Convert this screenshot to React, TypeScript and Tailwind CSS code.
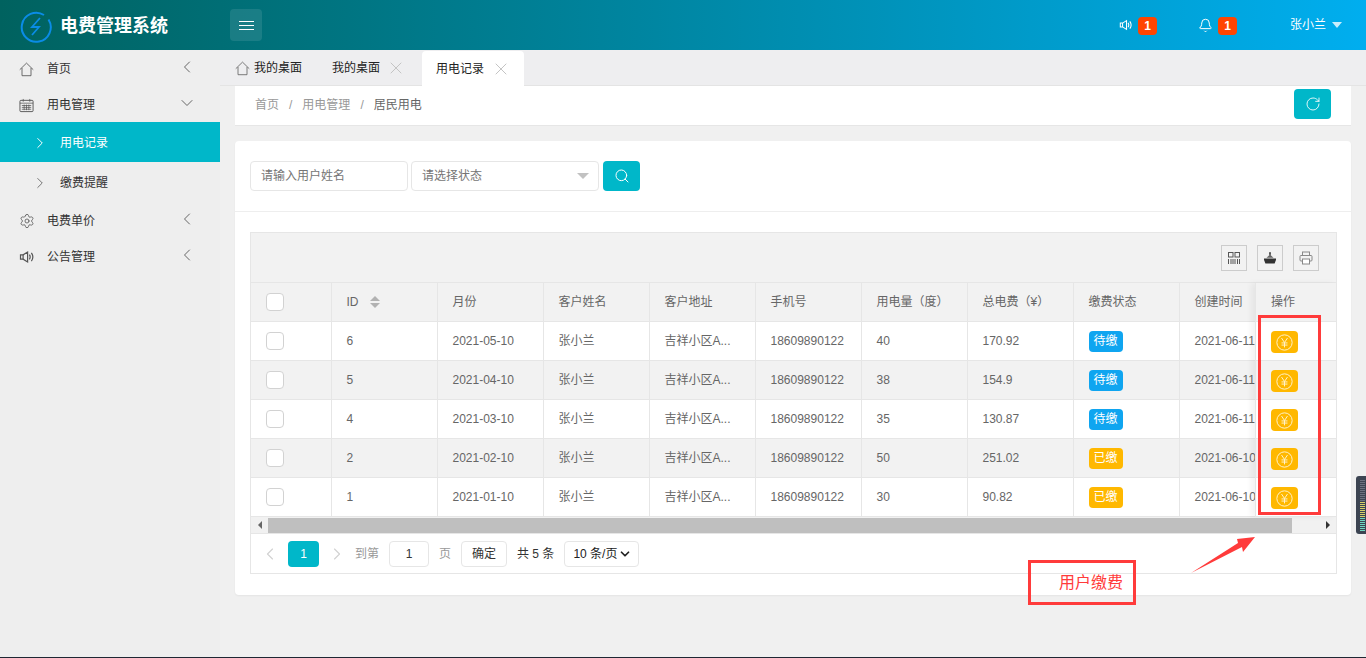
import { ChevronDown, ChevronLeft, ChevronRight, Bell, RotateCw, Search, Settings, X } from "lucide-react";
import type { ReactNode } from "react";

const font = "font-['Liberation_Sans','Noto_Sans_CJK_SC',sans-serif]";

const rows = [
  { id: 6, month: "2021-05-10", used: 40, fee: "170.92", paid: false, created: "2021-06-11" },
  { id: 5, month: "2021-04-10", used: 38, fee: "154.9", paid: false, created: "2021-06-11" },
  { id: 4, month: "2021-03-10", used: 35, fee: "130.87", paid: false, created: "2021-06-11" },
  { id: 2, month: "2021-02-10", used: 50, fee: "251.02", paid: true, created: "2021-06-10" },
  { id: 1, month: "2021-01-10", used: 30, fee: "90.82", paid: true, created: "2021-06-10" },
];

const headers = ["月份", "客户姓名", "客户地址", "手机号", "用电量（度）", "总电费（¥）", "缴费状态"];

function HouseIcon({ className }: { className?: string }) {
  return (
    <svg viewBox="0 0 16 16" fill="none" stroke="currentColor" strokeWidth="0.9" className={className}>
      <path d="M0.8 8.2L8 1.2l7.2 7" />
      <path d="M3.2 6.4v8.2h9.6V6.4" />
    </svg>
  );
}

function SpeakerIcon({ className }: { className?: string }) {
  return (
    <svg viewBox="0 0 16 16" fill="none" stroke="currentColor" strokeWidth="1.2" className={className}>
      <path d="M1.5 5.8h2.6L8.6 3v10L4.1 10.2H1.5z" />
      <path d="M4.1 5.8v4.4" />
      <path d="M10.4 5.6c.9 1.4.9 3.4 0 4.8M12.4 3.9c1.7 2.4 1.7 5.8 0 8.2" />
    </svg>
  );
}

function CalendarIcon() {
  return (
    <svg viewBox="0 0 16 16" fill="none" stroke="#555" strokeWidth="1" className="w-[15px] h-[15px]">
      <rect x="1" y="2.5" width="14" height="12" rx="1" />
      <path d="M4.5 1v3M11.5 1v3M1 5.5h14M3 8h10M3 10h10M3 12h10M5.5 7v6M8 7v6M10.5 7v6" strokeWidth="0.8" />
    </svg>
  );
}

function YuanIcon() {
  return (
    <svg viewBox="0 0 16 16" fill="none" stroke="#fff3d0" strokeWidth="0.9" className="w-[17px] h-[17px]">
      <circle cx="8" cy="8" r="7.2" />
      <path d="M5.2 3.8L8 8l2.8-4.2M8 8v4.6M5.2 8.4h5.6M5.2 10.4h5.6" />
    </svg>
  );
}

function MenuItem({ icon, label, chevron }: { icon: ReactNode; label: string; chevron: "left" | "down" }) {
  return (
    <div className="h-9 pt-[2px] flex items-center pl-[19px] text-[#333]">
      <span className="w-7 flex items-center text-[#555]">{icon}</span>
      <span className="flex-1">{label}</span>
      {chevron === "left" ? (
        <ChevronLeft className="w-5 h-5 mr-[23px] -mt-1 text-[#666]" strokeWidth={1.2} />
      ) : (
        <ChevronDown className="w-5 h-5 mr-[23px] -mt-1 text-[#666]" strokeWidth={1.2} />
      )}
    </div>
  );
}

function Sidebar() {
  return (
    <aside className="w-[220px] shrink-0 bg-[#eeeeee] text-xs">
      <MenuItem icon={<HouseIcon className="w-[15px] h-[15px]" />} label="首页" chevron="left" />
      <MenuItem icon={<CalendarIcon />} label="用电管理" chevron="down" />
      <div className="h-10 pt-[2px] bg-[#00b7c9] text-white flex items-center pl-[31px]">
        <ChevronRight className="w-[18px] h-[18px] mr-[11px]" strokeWidth={1.3} />
        用电记录
      </div>
      <div className="h-10 pt-[2px] text-[#333] flex items-center pl-[31px]">
        <ChevronRight className="w-[18px] h-[18px] mr-[11px] text-[#666]" strokeWidth={1.2} />
        缴费提醒
      </div>
      <MenuItem icon={<Settings className="w-4 h-4" strokeWidth={1.2} />} label="电费单价" chevron="left" />
      <MenuItem icon={<SpeakerIcon className="w-4 h-4" />} label="公告管理" chevron="left" />
    </aside>
  );
}

function Badge() {
  return <span className="mt-[2px] w-[19px] h-[18px] rounded-sm bg-[#ff4500] text-xs font-bold flex items-center justify-center">1</span>;
}

function Header() {
  return (
    <header className="h-[50px] shrink-0 flex items-center bg-gradient-to-r from-[#00625f] to-[#00aeef] text-white">
      <div className="w-[230px] mt-[2px] flex items-center pl-5">
        <svg viewBox="0 0 32 32" className="w-8 h-8 mr-[8px] mt-[2px]" fill="none" stroke="#0a8ce6" strokeWidth="2">
          <path d="M24 4A14.5 14.5 0 1 0 28.5 8.5" />
          <path d="M20 7l-8 9h7l-7 8" strokeWidth="1.8" />
        </svg>
        <span className="text-lg font-bold">电费管理系统</span>
      </div>
      <button className="w-8 h-8 rounded-sm bg-white/10 flex flex-col items-center justify-center gap-[3px]">
        <span className="w-[15px] h-px bg-white" />
        <span className="w-[15px] h-px bg-white" />
        <span className="w-[15px] h-px bg-white" />
      </button>
      <div className="flex-1" />
      <SpeakerIcon className="w-[14px] h-[14px] mr-[5px]" />
      <Badge />
      <Bell className="w-[15px] h-[15px] ml-[41px] mr-[5px]" strokeWidth={1.6} />
      <Badge />
      <span className="ml-[53px] text-xs">张小兰</span>
      <span className="ml-1.5 mr-6 w-0 h-0 border-x-[5px] border-x-transparent border-t-[6px] border-t-[#c9eefc]" />
    </header>
  );
}

function Tabs() {
  return (
    <div className="h-9 shrink-0 bg-[#eeeef0] border-b border-[#e4e4e4] flex items-end text-xs text-[#222] pl-[15px]">
      <div className="h-[34px] flex items-center w-[97px]">
        <HouseIcon className="w-[15px] h-[15px] mr-1 text-[#666]" />
        我的桌面
      </div>
      <div className="h-[34px] flex items-center w-[90px]">
        我的桌面
        <X className="w-5 h-5 ml-1.5 text-[#c4c4c4]" strokeWidth={1.2} />
      </div>
      <div className="h-[35px] -mb-px w-[102px] bg-white rounded-t-sm flex items-center pl-3.5">
        用电记录
        <X className="w-5 h-5 ml-[7px] text-[#c4c4c4]" strokeWidth={1.2} />
      </div>
    </div>
  );
}

function Checkbox() {
  return <span className="block w-[18px] h-[18px] bg-white border border-[#d2d2d2] rounded-sm" />;
}

function ToolButton({ children }: { children: ReactNode }) {
  return <button className="w-[26px] h-[26px] border border-[#ccc] flex items-center justify-center">{children}</button>;
}

function Cell({ children, first = false }: { children?: ReactNode; first?: boolean }) {
  return (
    <div className={`h-full shrink-0 border-r border-[#e6e6e6] flex items-center whitespace-nowrap overflow-hidden ${first ? "w-[81px] pl-[15px]" : "w-[106px] pl-[14.5px]"}`}>
      {children}
    </div>
  );
}

function DataTable() {
  return (
    <div className="border border-[#e6e6e6] text-xs text-[#666]">
      <div className="h-[50px] bg-[#f2f2f2] border-b border-[#e6e6e6] flex items-center justify-end gap-2.5 pr-[17px]">
        <ToolButton>
          <svg viewBox="0 0 14 14" className="w-3.5 h-3.5" fill="none" stroke="#555" strokeWidth="1">
            <rect x="1.5" y="1.5" width="4.5" height="4.5" />
            <rect x="8" y="1.5" width="4.5" height="4.5" />
            <path d="M1.5 8v5M4 8v5M6 8v5M8 8v5M10.5 8v5M12.5 8v5" />
          </svg>
        </ToolButton>
        <ToolButton>
          <svg viewBox="0 0 14 14" className="w-3.5 h-3.5" fill="#333">
            <path d="M1 7.5h12v1.2l-1.4 3.8H2.4L1 8.7z" />
            <path d="M3.5 6.8L7 3.4l3.5 3.4z" fill="#666" />
            <rect x="6.2" y="1.2" width="1.6" height="2.6" />
          </svg>
        </ToolButton>
        <ToolButton>
          <svg viewBox="0 0 14 14" className="w-3.5 h-3.5" fill="none" stroke="#888" strokeWidth="1">
            <rect x="3.5" y="1" width="7" height="3.5" />
            <rect x="1" y="4.5" width="12" height="5.5" rx="1" />
            <rect x="3.5" y="8" width="7" height="5" fill="white" />
          </svg>
        </ToolButton>
      </div>

      <div className="flex">
        <div className="w-[1004px] shrink-0 overflow-hidden">
          <div className="h-[39px] bg-[#f2f2f2] border-b border-[#e6e6e6] flex">
            <Cell first><Checkbox /></Cell>
            <Cell>
              ID
              <span className="ml-[11px] flex flex-col gap-[2px]">
                <span className="w-0 h-0 border-x-[5px] border-x-transparent border-b-[5px] border-b-[#b2b2b2]" />
                <span className="w-0 h-0 border-x-[5px] border-x-transparent border-t-[5px] border-t-[#b2b2b2]" />
              </span>
            </Cell>
            {headers.map((h) => (
              <Cell key={h}>{h}</Cell>
            ))}
            <Cell>创建时间</Cell>
          </div>
          {rows.map((r, i) => (
            <div key={r.id} className={`h-[39px] border-b border-[#e6e6e6] flex ${i % 2 === 1 ? "bg-[#f2f2f2]" : "bg-white"}`}>
              <Cell first><Checkbox /></Cell>
              <Cell>{r.id}</Cell>
              <Cell>{r.month}</Cell>
              <Cell>张小兰</Cell>
              <Cell>吉祥小区A...</Cell>
              <Cell>18609890122</Cell>
              <Cell>{r.used}</Cell>
              <Cell>{r.fee}</Cell>
              <Cell>
                <span className={`w-[34px] h-[21px] rounded-sm text-white flex items-center justify-center ${r.paid ? "bg-[#ffb800]" : "bg-[#0fa5f0]"}`}>
                  {r.paid ? "已缴" : "待缴"}
                </span>
              </Cell>
              <Cell>{r.created}</Cell>
            </div>
          ))}
        </div>

        <div className="flex-1 border-l border-[#e6e6e6] shadow-[-4px_0_6px_rgba(0,0,0,0.05)]">
          <div className="h-[39px] bg-[#f2f2f2] border-b border-[#e6e6e6] flex items-center pl-[15px]">操作</div>
          {rows.map((r, i) => (
            <div key={r.id} className={`h-[39px] border-b border-[#e6e6e6] flex items-center pl-[15px] ${i % 2 === 1 ? "bg-[#f2f2f2]" : "bg-white"}`}>
              <button className="mt-[2px] w-[27px] h-[22px] rounded-sm bg-[#ffb800] flex items-center justify-center">
                <YuanIcon />
              </button>
            </div>
          ))}
        </div>
      </div>

      <div className="h-[17px] bg-[#f1f1f1] border-b border-[#e6e6e6] flex items-center">
        <span className="w-[17px] flex justify-center">
          <span className="w-0 h-0 border-y-[4px] border-y-transparent border-r-[4px] border-r-[#666]" />
        </span>
        <span className="w-[1024px] h-[15px] bg-[#bfbfbf]" />
        <span className="flex-1" />
        <span className="w-[17px] flex justify-center">
          <span className="w-0 h-0 border-y-[4px] border-y-transparent border-l-[4px] border-l-[#333]" />
        </span>
      </div>

      <div className="h-[39px] flex items-center pl-[11px] text-[#333]">
        <ChevronLeft className="w-5 h-5 text-[#d2d2d2] -mx-[2px] mr-2" strokeWidth={1.4} />
        <span className="w-[31px] h-[26px] bg-[#00b7c9] rounded-sm text-white flex items-center justify-center">1</span>
        <ChevronRight className="w-5 h-5 text-[#d2d2d2] ml-2 -mr-[2px]" strokeWidth={1.4} />
        <span className="ml-[10px] text-[#999]">到第</span>
        <span className="ml-2.5 w-10 h-[26px] bg-white border border-[#e6e6e6] rounded-sm flex items-center justify-center">1</span>
        <span className="ml-2.5 text-[#999]">页</span>
        <button className="ml-2.5 w-[46px] h-[26px] bg-white border border-[#e6e6e6] rounded-sm">确定</button>
        <span className="ml-2.5">共 5 条</span>
        <span className="ml-2.5 w-[75px] h-[26px] bg-white border border-[#e6e6e6] rounded-sm flex items-center justify-between pl-2 pr-1.5 text-[#222]">
          10 条/页
          <ChevronDown className="w-3.5 h-3.5" strokeWidth={3} />
        </span>
      </div>
    </div>
  );
}

export default function App() {
  return (
    <div className={`relative h-[658px] overflow-hidden flex flex-col bg-[#f0f0f0] border-b border-[#1f2733] ${font}`}>
      <Header />
      <div className="flex-1 flex min-h-0">
        <Sidebar />
        <main className="flex-1 min-w-0 flex flex-col">
          <Tabs />
          <div className="px-[15px]">
            <div className="h-10 bg-white border-b border-[#e6e6e6] flex items-start justify-between pt-[3px] px-5 text-xs text-[#999]">
              <div className="h-[32px] flex items-center">
                <span>首页</span>
                <span className="mx-[10px]">/</span>
                <span>用电管理</span>
                <span className="mx-[10px]">/</span>
                <span className="text-[#666]">居民用电</span>
              </div>
              <button className="w-[37px] h-[30px] rounded-sm bg-[#00b7c9] text-white flex items-center justify-center">
                <RotateCw className="w-4 h-4" strokeWidth={1.3} />
              </button>
            </div>

            <div className="mt-[15px] h-[454px] bg-white rounded-sm shadow-[0_1px_2px_rgba(0,0,0,0.05)]">
              <div className="h-[71px] border-b border-[#eeeeee] flex pt-5 pl-[15px] text-[#757575] text-xs">
                <div className="w-[158px] h-[30px] border border-[#e6e6e6] rounded-sm flex items-center pl-2.5">请输入用户姓名</div>
                <div className="ml-[3px] w-[188px] h-[30px] border border-[#e6e6e6] rounded-sm flex items-center justify-between pl-2.5 pr-[9px]">
                  请选择状态
                  <span className="w-0 h-0 border-x-[6px] border-x-transparent border-t-[6px] border-t-[#c2c2c2]" />
                </div>
                <button className="ml-1 w-[37px] h-[30px] rounded-sm bg-[#00b7c9] text-white flex items-center justify-center">
                  <Search className="w-4 h-4" strokeWidth={1.5} />
                </button>
              </div>
              <div className="pl-[15px] pr-[14px] pt-5">
                <DataTable />
              </div>
            </div>
          </div>
        </main>
      </div>

      {/* annotation marks drawn over the screenshot */}
      <div className="absolute left-[1258px] top-[315px] w-[63px] h-[200px] border-[3px] border-[#ff3b3b]" />
      <div className="absolute left-[1028px] top-[560px] w-[108px] h-[45px] border-[3px] border-[#ff3b3b] flex items-center pl-7 text-base text-[#ff3b3b]">用户缴费</div>
      <svg className="absolute left-[1185px] top-[530px] w-[75px] h-[50px]" viewBox="1185 530 75 50" fill="#ff3b3b">
        <polygon points="1191,573 1238,543 1237,539 1255,537 1243,552 1242,547" />
      </svg>
      <div className="absolute right-0 top-[476px] w-2.5 h-[58px] bg-[#3c4452] rounded-l-[3px] flex flex-col items-center justify-center gap-px">
        {Array.from({ length: 26 }).map((_, i) => (
          <span key={i} className={`w-[5px] h-px ml-[2px] ${i < 11 ? "bg-[#6b7280]" : i < 19 ? "bg-[#d6cf6a]" : "bg-[#6fd6c0]"}`} />
        ))}
      </div>
    </div>
  );
}
